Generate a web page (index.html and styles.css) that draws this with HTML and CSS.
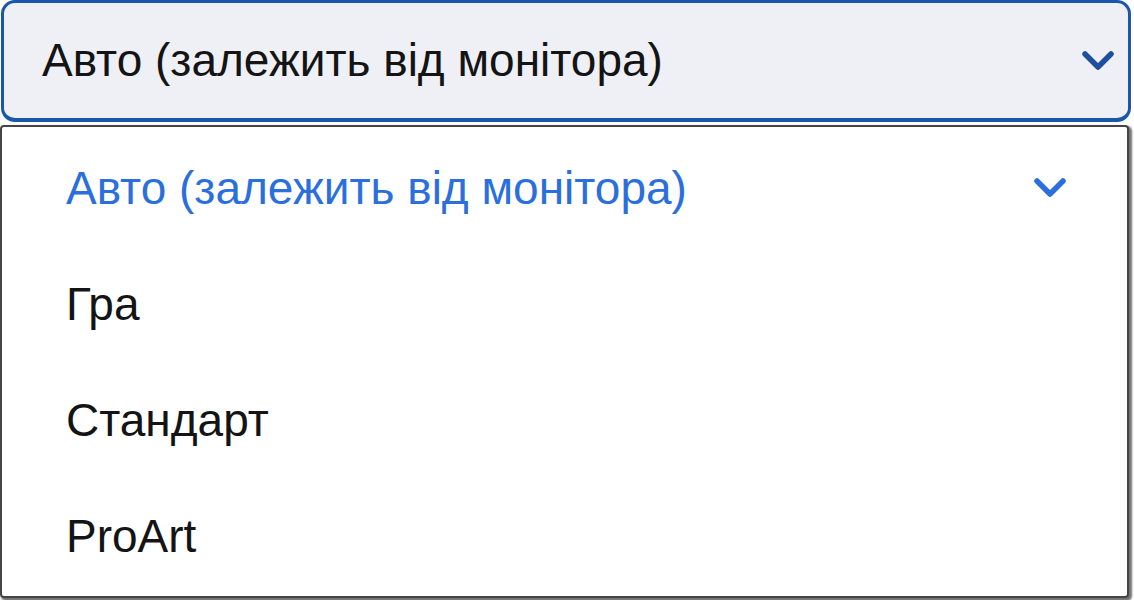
FILE: index.html
```html
<!DOCTYPE html>
<html lang="uk">
<head>
<meta charset="utf-8">
<link rel="stylesheet" href="styles.css">
</head>
<body>
<div class="select">
  <span class="value">Авто (залежить від монітора)</span>
  <svg class="chev chev-top" viewBox="0 0 32 22"><path d="M3 4 L16 17 L29 4"/></svg>
</div>
<div class="panel">
  <div class="opt opt-selected">
    <span>Авто (залежить від монітора)</span>
    <svg class="chev chev-opt" viewBox="0 0 32 22"><path d="M3 4 L16 17 L29 4"/></svg>
  </div>
  <div class="opt">Гра</div>
  <div class="opt">Стандарт</div>
  <div class="opt">ProArt</div>
</div>
</body>
</html>
```
FILE: styles.css
```css
html, body {
  margin: 0;
  padding: 0;
  background: #ffffff;
}
body {
  width: 1134px;
  height: 600px;
  overflow: hidden;
  font-family: "Liberation Sans", Arial, sans-serif;
  color: #141414;
}
.select {
  box-sizing: border-box;
  height: 122px;
  margin: 0 3px 0 1px;
  border: 3px solid #1a57aa;
  border-bottom-width: 4px;
  border-radius: 14px;
  background: #eef0f6;
  display: flex;
  align-items: center;
  justify-content: space-between;
  padding: 0 14px 0 38px;
  font-size: 46px;
}
.value {
  padding-bottom: 2px;
}
.chev {
  fill: none;
  stroke-width: 5.5;
  stroke-linecap: round;
  stroke-linejoin: round;
}
.chev-top {
  width: 32px;
  height: 22px;
  stroke: #1d4f9e;
}
.panel {
  box-sizing: border-box;
  height: 473px;
  margin: 3px 5px 0 0;
  border: 2px solid #454545;
  border-radius: 4px;
  background: #ffffff;
  box-shadow: 2px 2px 2px 1px rgba(0, 0, 0, 0.55);
  padding-top: 3px;
  display: flex;
  flex-direction: column;
}
.opt {
  height: 116px;
  display: flex;
  align-items: center;
  justify-content: space-between;
  padding: 0 60px 0 64px;
  font-size: 46px;
  color: #141414;
}
.opt-selected {
  color: #2a6fdc;
}
.chev-opt {
  width: 34px;
  height: 22px;
  stroke: #2a6fdc;
}
```
